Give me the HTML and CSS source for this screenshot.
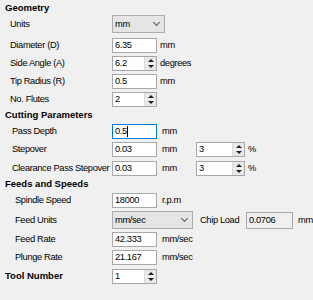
FILE: index.html
```html
<!DOCTYPE html>
<html lang="en">
<head>
    <meta charset="UTF-8">
    <title>Tool Parameters</title>
    <link rel="stylesheet" href="styles.css">
</head>
<body>
<div class="panel">
    <div class="group geometry">
        <div class="title">Geometry</div>
        <div class="row row-units">
            <label>Units</label>
            <div class="combo combo-units"><span>mm</span><i class="chev"></i></div>
        </div>
        <div class="row">
            <label>Diameter (D)</label>
            <div class="edit">6.35</div>
            <span class="unit">mm</span>
        </div>
        <div class="row">
            <label>Side Angle (A)</label>
            <div class="spin"><span class="val">6.2</span><span class="btns"><i class="up"></i><i class="down"></i></span></div>
            <span class="unit">degrees</span>
        </div>
        <div class="row">
            <label>Tip Radius (R)</label>
            <div class="edit">0.5</div>
            <span class="unit">mm</span>
        </div>
        <div class="row">
            <label>No. Flutes</label>
            <div class="spin"><span class="val">2</span><span class="btns"><i class="up"></i><i class="down"></i></span></div>
        </div>
    </div>

    <div class="group cutting">
        <div class="title">Cutting Parameters</div>
        <div class="row">
            <label>Pass Depth</label>
            <div class="edit focus">0.5<b class="caret"></b></div>
            <span class="unit">mm</span>
        </div>
        <div class="row">
            <label>Stepover</label>
            <div class="edit">0.03</div>
            <span class="unit">mm</span>
            <div class="spin spin-pct"><span class="val">3</span><span class="btns"><i class="up"></i><i class="down"></i></span></div>
            <span class="pct">%</span>
        </div>
        <div class="row row-clear">
            <label>Clearance Pass Stepover</label>
            <div class="edit">0.03</div>
            <span class="unit">mm</span>
            <div class="spin spin-pct"><span class="val">3</span><span class="btns"><i class="up"></i><i class="down"></i></span></div>
            <span class="pct">%</span>
        </div>
    </div>

    <div class="group feeds">
        <div class="title">Feeds and Speeds</div>
        <div class="row">
            <label>Spindle Speed</label>
            <div class="edit">18000</div>
            <span class="unit">r.p.m</span>
        </div>
        <div class="row row-feedunits">
            <label>Feed Units</label>
            <div class="combo combo-feed"><span>mm/sec</span><i class="chev"></i></div>
            <span class="chip-label">Chip Load</span>
            <div class="edit readonly">0.0706</div>
            <span class="chip-unit">mm</span>
        </div>
        <div class="row">
            <label>Feed Rate</label>
            <div class="edit">42.333</div>
            <span class="unit">mm/sec</span>
        </div>
        <div class="row">
            <label>Plunge Rate</label>
            <div class="edit">21.167</div>
            <span class="unit">mm/sec</span>
        </div>
    </div>

    <div class="row tool">
        <label class="title">Tool Number</label>
        <div class="spin"><span class="val">1</span><span class="btns"><i class="up"></i><i class="down"></i></span></div>
    </div>
</div>
</body>
</html>
```

FILE: styles.css
```css
*{
    margin: 0;
    padding: 0;
    box-sizing: border-box;
}
body{
    background: #f0f0f0;
    color: #000;
    font-family: "Liberation Sans", Arial, sans-serif;
    font-size: 9.3px;
    letter-spacing: -0.35px;
    width: 313px;
    height: 300px;
    overflow: hidden;
}
.panel{
    padding: 1px 0 0 5px;
}
.title{
    font-weight: bold;
    font-size: 9.5px;
    letter-spacing: 0;
    height: 14px;
    line-height: 14px;
}
.row{
    display: flex;
    align-items: center;
    height: 18px;
}
.row label{
    flex: none;
    white-space: nowrap;
}
.geometry .row label{
    width: 102px;
    margin-left: 5px;
}
.cutting .row label{
    width: 100px;
    margin-left: 7px;
}
.feeds .row label{
    width: 97px;
    margin-left: 10px;
}
.row-units{
    margin-bottom: 3px;
}
.row-clear{
    margin-top: 1px;
}
.row-feedunits{
    height: 20px;
    margin-top: 1px;
}
.edit,
.spin,
.combo{
    flex: none;
    height: 15px;
    border: 1px solid #a8a8a8;
    background: #fff;
    display: flex;
    align-items: center;
    padding-left: 2px;
}
.edit{
    width: 45px;
}
.edit.focus{
    border-color: #0078d7;
}
.edit.readonly{
    background: #f0f0f0;
    width: 47px;
    height: 17px;
}
.caret{
    display: inline-block;
    width: 1px;
    height: 11px;
    background: #000;
}
.combo{
    background: #e5e5e5;
    border-color: #adadad;
    height: 18px;
    justify-content: space-between;
    padding-right: 5px;
}
.combo-units{
    width: 53px;
}
.combo-feed{
    width: 81px;
}
.chev{
    width: 5px;
    height: 5px;
    border-right: 1px solid #555;
    border-bottom: 1px solid #555;
    transform: rotate(45deg);
    margin-top: -3px;
}
.spin{
    width: 45px;
    padding-right: 0;
    justify-content: space-between;
}
.spin .btns{
    width: 12px;
    height: 13px;
    display: flex;
    flex-direction: column;
    border-left: 1px solid #dcdcdc;
}
.spin .btns i{
    flex: 1;
    background: #e8e8e8;
    position: relative;
}
.spin .btns i + i{
    border-top: 1px solid #f8f8f8;
}
.spin .btns i::after{
    content: "";
    position: absolute;
    left: 3px;
    top: 2px;
    border-left: 3px solid transparent;
    border-right: 3px solid transparent;
}
.spin .btns .up::after{
    border-bottom: 3px solid #222;
}
.spin .btns .down::after{
    border-top: 3px solid #222;
    top: 1px;
}
.unit{
    margin-left: 3px;
}
.cutting .unit{
    width: 39px;
    margin-left: 0;
    padding-left: 5px;
}
.feeds .unit{
    margin-left: 5px;
}
.spin-pct{
    width: 49px;
}
.pct{
    margin-left: 3px;
}
.chip-label{
    margin-left: 7px;
    width: 46px;
}
.chip-unit{
    margin-left: 5px;
}
.tool{
    margin-top: 1px;
}
.tool label{
    width: 107px;
    height: 18px;
    line-height: 18px;
}
```
